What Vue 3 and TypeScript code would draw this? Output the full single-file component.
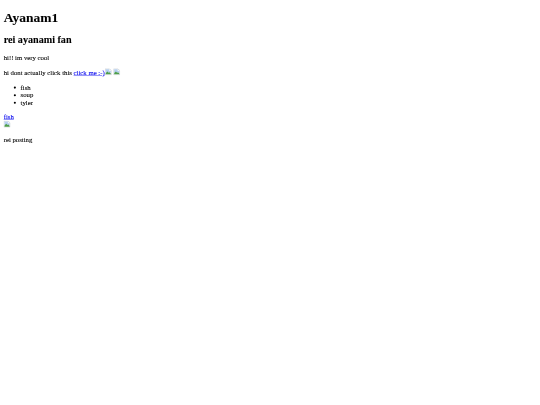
<script setup lang="ts">
const items: string[] = ['fish', 'soup', 'tyler']
</script>

<template>
  <div class="viewport">
    <main class="page">
      <h1>Ayanam1</h1>
      <h2>rei ayanami fan</h2>
      <p>hi!! im very cool</p>
      <p>
        hi dont actually click this <a href="#">click me :-)</a>
        <svg class="broken" viewBox="0 0 16 16"><path d="M.5.5h10l5 5v10H.5z" fill="#f4f6f8" stroke="#a8b0b8"/><path d="M2 2h8v4h4v4H2z" fill="#b5cff0"/><path d="M2 14v-3l4-4 3 3 2-1 3 3v2z" fill="#4f9e4a"/></svg>
        {{ ' ' }}
        <svg class="broken" viewBox="0 0 16 16"><path d="M.5.5h10l5 5v10H.5z" fill="#f4f6f8" stroke="#a8b0b8"/><path d="M2 2h8v4h4v4H2z" fill="#b5cff0"/><path d="M2 14v-3l4-4 3 3 2-1 3 3v2z" fill="#4f9e4a"/></svg>
      </p>
      <ul>
        <li v-for="item in items" :key="item">{{ item }}</li>
      </ul>
      <a href="#">fish</a>
      <br />
      <svg class="broken" viewBox="0 0 16 16"><path d="M.5.5h10l5 5v10H.5z" fill="#f4f6f8" stroke="#a8b0b8"/><path d="M2 2h8v4h4v4H2z" fill="#b5cff0"/><path d="M2 14v-3l4-4 3 3 2-1 3 3v2z" fill="#4f9e4a"/></svg>
      <p>rei posting</p>
    </main>
  </div>
</template>

<style scoped>
.viewport {
  width: 540px;
  height: 405px;
  overflow: hidden;
  background: #fff;
}
.page {
  width: 1280px;
  height: 960px;
  box-sizing: border-box;
  padding: 0 8px;
  display: flow-root;
  font-family: "Liberation Serif", serif;
  font-size: 16px;
  color: #000;
  background: #fff;
  transform: translate(0.3px, 0.5px) scale(0.421875);
  transform-origin: 0 0;
  filter: blur(0.3px);
  -webkit-text-stroke: 0.2px currentColor;
}
h1 { font-size: 32px; margin: 21.44px 0; }
h2 { font-size: 24px; margin: 19.92px 0; }
p { margin: 16px 0; }
ul { margin: 16px 0; padding-left: 40px; }
a { color: #0000ee; text-decoration: underline; }
.broken { width: 16px; height: 16px; vertical-align: baseline; }
</style>

<style>
html, body { margin: 0; background: #fff; }
</style>
